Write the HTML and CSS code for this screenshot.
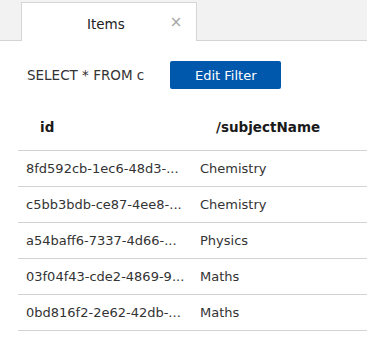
FILE: index.html
```html
<!DOCTYPE html>
<html>
<head>
<meta charset="utf-8">
<link rel="stylesheet" href="styles.css">
</head>
<body>
<div class="tabbar">
  <div class="tab">
    <span class="tab-label">Items</span>
    <span class="tab-close">×</span>
  </div>
</div>
<div class="content">
  <div class="toolbar">
    <span class="query">SELECT * FROM c</span>
    <button class="btn">Edit Filter</button>
  </div>
  <div class="grid">
    <div class="row head">
      <div class="cell c1">id</div>
      <div class="cell c2">/subjectName</div>
    </div>
    <div class="row">
      <div class="cell c1">8fd592cb-1ec6-48d3-...</div>
      <div class="cell c2">Chemistry</div>
    </div>
    <div class="row">
      <div class="cell c1">c5bb3bdb-ce87-4ee8-...</div>
      <div class="cell c2">Chemistry</div>
    </div>
    <div class="row">
      <div class="cell c1">a54baff6-7337-4d66-...</div>
      <div class="cell c2">Physics</div>
    </div>
    <div class="row">
      <div class="cell c1">03f04f43-cde2-4869-9...</div>
      <div class="cell c2">Maths</div>
    </div>
    <div class="row last">
      <div class="cell c1">0bd816f2-2e62-42db-...</div>
      <div class="cell c2">Maths</div>
    </div>
  </div>
</div>
</body>
</html>
```
FILE: styles.css
```css
html, body {
  margin: 0;
  padding: 0;
  background: #ffffff;
  font-family: "DejaVu Sans", Verdana, sans-serif;
  font-size: 13px;
  color: #333333;
  overflow: hidden;
}

.tabbar {
  height: 40px;
  background: #f2f2f2;
  border-bottom: 1px solid #d3d3d3;
  display: flex;
  align-items: flex-end;
  padding-left: 21px;
}

.tab {
  box-sizing: border-box;
  width: 176px;
  height: 39px;
  margin-bottom: -1px;
  background: #ffffff;
  border: 1px solid #d6d6d6;
  border-bottom: none;
  display: flex;
  align-items: center;
  padding-left: 65px;
  padding-top: 3px;
}

.tab-label {
  font-size: 13.5px;
  color: #222222;
}

.tab-close {
  margin-left: 45px;
  margin-top: -3px;
  font-size: 15px;
  color: #a6a6a6;
}

.toolbar {
  display: flex;
  align-items: center;
  height: 28px;
  padding: 20px 0 15px 27px;
}

.query {
  font-size: 13.5px;
  color: #333333;
}

.btn {
  margin-left: 26px;
  width: 111px;
  height: 28px;
  border: none;
  border-radius: 2px;
  background: #0058ad;
  color: #ffffff;
  font-family: "DejaVu Sans", Verdana, sans-serif;
  font-size: 13px;
  padding: 0;
}

.grid {
  margin-left: 18px;
}

.row {
  box-sizing: border-box;
  display: flex;
  height: 36px;
  align-items: center;
  border-top: 1px solid #d3d3d3;
}

.row.head {
  height: 46px;
  border-top: none;
  font-weight: bold;
  font-size: 13.5px;
  color: #1a1a1a;
}

.row.last {
  height: 37px;
  border-bottom: 1px solid #d3d3d3;
}

.cell {
  white-space: nowrap;
  overflow: hidden;
}

.c1 {
  width: 174px;
  padding-left: 8px;
  box-sizing: border-box;
}

.c2 {
  padding-left: 8px;
}

.head .c1 {
  padding-left: 22px;
}

.head .c2 {
  padding-left: 24px;
}
```
